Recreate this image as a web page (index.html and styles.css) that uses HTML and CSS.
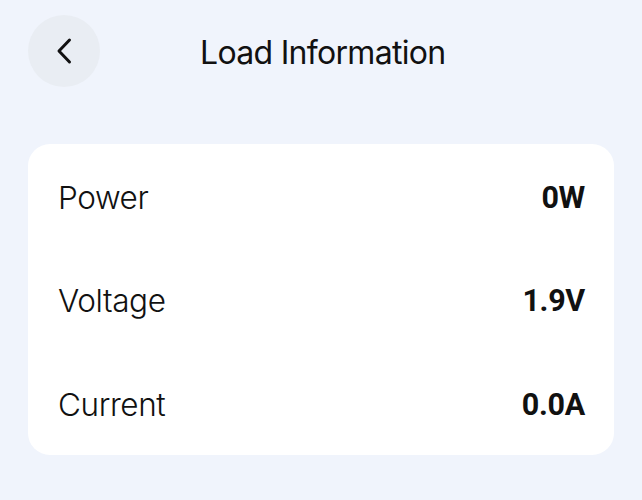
FILE: index.html
```html
<!DOCTYPE html>
<html>
<head>
<meta charset="utf-8">
<link rel="stylesheet" href="styles.css">
</head>
<body>
<div class="page">
  <header class="header">
    <button class="back" aria-label="Back">
      <svg width="24" height="30" viewBox="0 0 24 30"><path d="M17.5 4 L7 15 L17.5 26" fill="none" stroke="#111" stroke-width="3" stroke-linecap="round" stroke-linejoin="round"/></svg>
    </button>
    <h1 class="title">Load Information</h1>
  </header>
  <section class="card">
    <div class="row"><span class="label">Power</span><span class="value">0W</span></div>
    <div class="row"><span class="label">Voltage</span><span class="value">1.9V</span></div>
    <div class="row"><span class="label">Current</span><span class="value">0.0A</span></div>
  </section>
</div>
</body>
</html>
```
FILE: styles.css
```css
html, body { margin: 0; padding: 0; }
body { background: #f0f4fc; font-family: "Inter", "Noto Sans", sans-serif; color: #111; width: 642px; height: 500px; overflow: hidden; }
.page { padding: 15px 28px 0 28px; }
.header { display: flex; align-items: center; height: 72px; }
.back { width: 72px; height: 72px; border-radius: 50%; border: none; background: #e9edf3; display: flex; align-items: center; justify-content: center; padding: 0; }
.title { margin: 0 0 0 100px; font-size: 32px; font-weight: 400; letter-spacing: -0.7px; color: #111; position: relative; top: 1px; }
.card { margin-top: 57px; background: #fff; border-radius: 22px; padding: 0 29px 0 30px; }
.row { display: flex; justify-content: space-between; align-items: center; height: 103.5px; padding-top: 3px; box-sizing: border-box; }
.label { font-size: 31.5px; font-weight: 300; letter-spacing: -0.4px; }
.value { font-family: "Roboto", sans-serif; font-size: 30.5px; font-weight: 700; letter-spacing: -0.3px; }
```
